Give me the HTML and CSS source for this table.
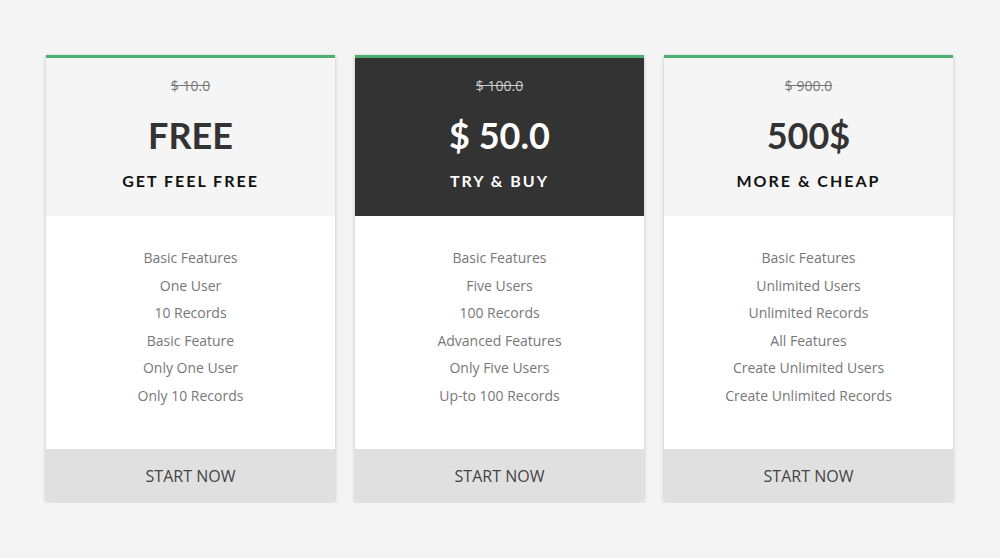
FILE: index.html
```html
<!DOCTYPE html>
<html>
<head>
<meta charset="utf-8">
<link rel="stylesheet" href="styles.css">
</head>
<body>
<div class="plans">
  <div class="card">
    <div class="head">
      <div class="old">$ 10.0</div>
      <div class="price">FREE</div>
      <div class="name">GET FEEL FREE</div>
    </div>
    <ul class="features">
      <li>Basic Features</li>
      <li>One User</li>
      <li>10 Records</li>
      <li>Basic Feature</li>
      <li>Only One User</li>
      <li>Only 10 Records</li>
    </ul>
    <div class="btn">START NOW</div>
  </div>
  <div class="card featured">
    <div class="head">
      <div class="old">$ 100.0</div>
      <div class="price">$ 50.0</div>
      <div class="name">TRY &amp; BUY</div>
    </div>
    <ul class="features">
      <li>Basic Features</li>
      <li>Five Users</li>
      <li>100 Records</li>
      <li>Advanced Features</li>
      <li>Only Five Users</li>
      <li>Up-to 100 Records</li>
    </ul>
    <div class="btn">START NOW</div>
  </div>
  <div class="card">
    <div class="head">
      <div class="old">$ 900.0</div>
      <div class="price">500$</div>
      <div class="name">MORE &amp; CHEAP</div>
    </div>
    <ul class="features">
      <li>Basic Features</li>
      <li>Unlimited Users</li>
      <li>Unlimited Records</li>
      <li>All Features</li>
      <li>Create Unlimited Users</li>
      <li>Create Unlimited Records</li>
    </ul>
    <div class="btn">START NOW</div>
  </div>
</div>
</body>
</html>
```
FILE: styles.css
```css
html, body {
  margin: 0;
  padding: 0;
  background: #f4f4f4;
}
body {
  font-family: "Open Sans", "Liberation Sans", sans-serif;
}
.plans {
  display: flex;
  gap: 20px;
  padding-top: 55px;
  padding-left: 46px;
}
.card {
  width: 289px;
  border-top: 3px solid #4caf6e;
  background: #fff;
  border-radius: 0 0 4px 4px;
  box-shadow: 0 1px 4px rgba(0,0,0,0.2);
  overflow: hidden;
}
.head {
  background: #f5f5f5;
  height: 158px;
  box-sizing: border-box;
  padding-top: 18px;
  text-align: center;
}
.featured .head {
  background: #333333;
}
.old {
  font-size: 14px;
  line-height: 20px;
  color: #777;
  text-decoration: line-through;
}
.featured .old {
  color: #ccc;
}
.price {
  font-family: "Lato", "Open Sans", sans-serif;
  font-weight: 700;
  font-size: 36px;
  line-height: 44px;
  margin-top: 17px;
  color: #333;
}
.featured .price {
  color: #fff;
}
.name {
  font-family: "Lato", "Open Sans", sans-serif;
  font-weight: 700;
  font-size: 16px;
  line-height: 20px;
  letter-spacing: 2px;
  margin-top: 14px;
  color: #111;
}
.featured .name {
  color: #fff;
}
.features {
  list-style: none;
  margin: 0;
  padding: 28px 0 0;
  height: 233px;
  box-sizing: border-box;
  text-align: center;
  font-size: 14px;
  line-height: 27.5px;
  color: #777;
}
.btn {
  background: #e0e0e0;
  height: 54px;
  line-height: 55px;
  text-align: center;
  font-size: 16px;
  color: #444;
}
```
